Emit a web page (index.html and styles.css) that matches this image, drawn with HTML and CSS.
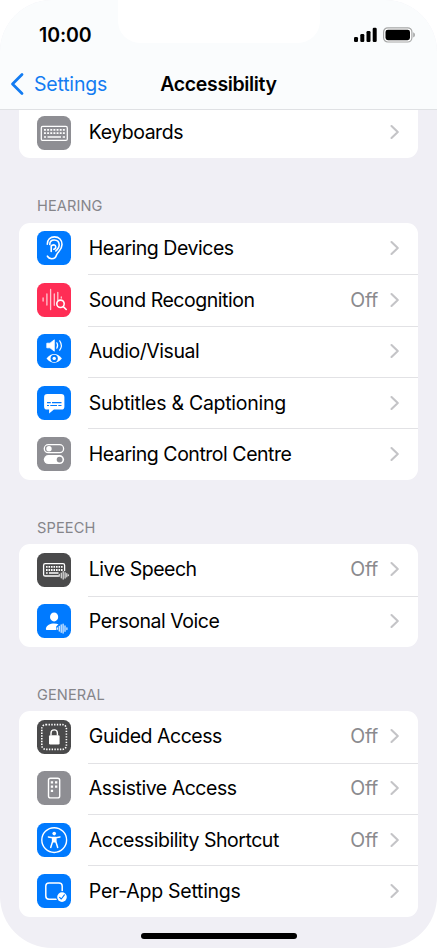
FILE: index.html
```html
<!DOCTYPE html>
<html lang="en">
<head>
<meta charset="utf-8">
<title>Accessibility</title>
<link rel="stylesheet" href="styles.css">
</head>
<body>
<svg class="defs" aria-hidden="true">
  <symbol id="chevron" viewBox="0 0 10 16"><path d="M1.5 2 L7.8 8 L1.5 14" fill="none" stroke="#c4c4c7" stroke-width="2.1" stroke-linecap="round" stroke-linejoin="round"/></symbol>
</svg>
<div class="screen">
  <header class="header">
    <div class="notch"></div>
    <div class="status">
      <span class="time">10:00</span>
      <div class="indicators">
        <svg width="24" height="16" viewBox="0 0 24 16"><rect x="0" y="10" width="4" height="5" rx="1.2"/><rect x="6.3" y="7" width="4" height="8" rx="1.2"/><rect x="12.5" y="4" width="4" height="11" rx="1.2"/><rect x="18.7" y="0.7" width="4" height="14.3" rx="1.2"/></svg>
        <svg width="33" height="16" viewBox="0 0 33 16"><rect x="0.6" y="0.8" width="28.3" height="14.2" rx="4.2" fill="#fff" stroke="#a5a6a6" stroke-width="1.2"/><rect x="2.5" y="2.7" width="24.5" height="10.5" rx="2.4"/><path d="M30.2 5.3 Q32 6 32 7.9 Q32 9.8 30.2 10.5Z" fill="#a5a6a6"/></svg>
      </div>
    </div>
    <nav class="nav">
      <a class="back"><svg width="14" height="24" viewBox="0 0 14 24"><path d="M12 2.5 L2.5 12 L12 21.5" fill="none" stroke="#137cf2" stroke-width="2.8" stroke-linecap="round" stroke-linejoin="round"/></svg><span>Settings</span></a>
      <h1>Accessibility</h1>
      <span></span>
    </nav>
  </header>
  <main class="content">
    <section class="card card-cut">
      <div class="row">
        <svg class="icon gray" viewBox="0 0 34 34"><rect x="4.3" y="10.4" width="26" height="14" rx="1.5" fill="none" stroke="#fff" stroke-width="1.3"/><path d="M7 13.8H28M7 17.2H28" stroke="#fff" stroke-width="1.8" stroke-dasharray="1.9 1.25"/><path d="M7 21H9M10.5 21H24M25.7 21H28" stroke="#fff" stroke-width="1.6"/></svg>
        <div class="body"><span class="label">Keyboards</span><svg class="chev"><use href="#chevron"/></svg></div>
      </div>
    </section>
    <h2>HEARING</h2>
    <section class="card">
      <div class="row">
        <svg class="icon blue" viewBox="0 0 34 34"><g fill="none" stroke="#fff" stroke-width="1.6" stroke-linecap="round" stroke-linejoin="round"><path d="M10.3 13.2C10.3 8.6 13.4 5.9 17.4 5.9C22.1 5.9 25 9.2 25 13.6C25 19.6 20.4 20.7 19.4 24.3C18.8 26.6 17 27.8 14.8 27.8C12.7 27.8 11.2 26.8 10.4 25.2"/><path d="M12.8 13.5C12.8 10.6 14.7 9 17.2 9C20.1 9 22.2 11 22.2 14.2C22.2 17.3 20.4 18.3 18.8 20"/><path d="M14.2 14.8Q18.3 12.7 18.7 15.6Q18.9 18.1 16.7 18.3M14.2 14.8V20.5"/></g></svg>
        <div class="body"><span class="label">Hearing Devices</span><svg class="chev"><use href="#chevron"/></svg></div>
      </div>
      <div class="row">
        <svg class="icon red" viewBox="0 0 34 34"><g fill="none" stroke="#ffc7d0" stroke-width="1.3" stroke-linecap="round"><path d="M6.1 15V18M9.9 11V22M13.6 6.5V26.5M17.3 11V22.3M20.8 9.3V17M24.3 14V15"/></g><g fill="none" stroke="#fff" stroke-width="1.6" stroke-linecap="round"><circle cx="23.5" cy="20.8" r="3.7"/><path d="M26.3 23.6L29.2 26.5"/></g></svg>
        <div class="body"><span class="label">Sound Recognition</span><span class="value">Off</span><svg class="chev"><use href="#chevron"/></svg></div>
      </div>
      <div class="row">
        <svg class="icon blue" viewBox="0 0 34 34"><path d="M9.8 9.2H13L17.3 5.8V17.2L13 13.8H9.8Z" fill="#fff" stroke="#fff" stroke-width=".8" stroke-linejoin="round"/><path d="M19.8 8.8Q21.5 11.5 19.8 14.2M22.7 6.8Q26 11.5 22.7 16.2" fill="none" stroke="#fff" stroke-width="1.2" stroke-linecap="round"/><path d="M9.5 24.4Q17.2 15.6 24.9 24.4Q17.2 33.2 9.5 24.4Z" fill="#fff"/><circle cx="17.2" cy="24.4" r="3.6" fill="#007aff"/><circle cx="17.2" cy="24.4" r="1.7" fill="#fff"/></svg>
        <div class="body"><span class="label">Audio/Visual</span><svg class="chev"><use href="#chevron"/></svg></div>
      </div>
      <div class="row">
        <svg class="icon blue" viewBox="0 0 34 34"><path d="M10.3 8H24.2Q27.4 8 27.4 11.2V20.4Q27.4 23.6 24.2 23.6H16.9L12.1 27.5V23.6H10.3Q7.1 23.6 7.1 20.4V11.2Q7.1 8 10.3 8Z" fill="#fff"/><path d="M10 16.7H13.8M15 16.7H24.5M10 19.5H12M13.3 19.5H20M21.3 19.5H24.5" stroke="#007aff" stroke-width="1.2"/></svg>
        <div class="body"><span class="label wide">Subtitles &amp; Captioning</span><svg class="chev"><use href="#chevron"/></svg></div>
      </div>
      <div class="row">
        <svg class="icon gray" viewBox="0 0 34 34"><rect x="7.3" y="7.7" width="19.3" height="7.9" rx="3.95" fill="none" stroke="#fff" stroke-width="1.3"/><circle cx="12" cy="11.7" r="2.7" fill="#fff"/><rect x="6.8" y="18.1" width="20.3" height="9" rx="4.5" fill="#fff"/><circle cx="22.6" cy="22.6" r="2.9" fill="#8e8e93"/></svg>
        <div class="body"><span class="label">Hearing Control Centre</span><svg class="chev"><use href="#chevron"/></svg></div>
      </div>
    </section>
    <h2>SPEECH</h2>
    <section class="card">
      <div class="row">
        <svg class="icon dark" viewBox="0 0 34 34"><path d="M21.5 23H8.2Q6.6 23 6.6 21.4V12.2Q6.6 10.6 8.2 10.6H26Q27.6 10.6 27.6 12.2V17.5" fill="none" stroke="#fff" stroke-width="1.3" stroke-linecap="round"/><path d="M9 13.8H25.7M9 17H25.7" stroke="#fff" stroke-width="1.8" stroke-dasharray="1.6 .9"/><path d="M9 20.1H10.7M12 20.1H21.5" stroke="#fff" stroke-width="1.5"/><path d="M22.3 21.5V23.2M24.3 20.2V24.8M26.2 18.7V26M28.1 19.7V25M29.8 20.7V23.8M31.4 21.8V22.6" stroke="#d7d7d7" stroke-width="1.3" stroke-linecap="round"/></svg>
        <div class="body"><span class="label">Live Speech</span><span class="value">Off</span><svg class="chev"><use href="#chevron"/></svg></div>
      </div>
      <div class="row">
        <svg class="icon blue" viewBox="0 0 34 34"><ellipse cx="17.1" cy="12.9" rx="4.1" ry="4.5" fill="#fff"/><path d="M19.3 26.1H10Q8.5 26.1 8.9 24.4C9.8 21.2 13 19.4 17.1 19.4Q19.6 19.4 21.5 20.3L19.2 22.5Z" fill="#fff"/><path d="M20.4 24V25.2M22.3 22.3V27M24.2 21V28.3M26.1 20.2V29M28 22V27.3M29.9 23.8V25.5" stroke="#d5e9ff" stroke-width="1.3" stroke-linecap="round"/></svg>
        <div class="body"><span class="label">Personal Voice</span><svg class="chev"><use href="#chevron"/></svg></div>
      </div>
    </section>
    <h2>GENERAL</h2>
    <section class="card">
      <div class="row">
        <svg class="icon dark" viewBox="0 0 34 34"><rect x="4.8" y="4.6" width="24.6" height="24.8" rx="4" fill="none" stroke="#fff" stroke-width="1.6" stroke-dasharray="1.4 1.35"/><rect x="12" y="15.2" width="10.6" height="9.2" rx="1.2" fill="#fff"/><path d="M14 15.5V13Q14 9.9 17.2 9.9Q20.4 9.9 20.4 13V15.5" fill="none" stroke="#fff" stroke-width="1.4"/></svg>
        <div class="body"><span class="label">Guided Access</span><span class="value">Off</span><svg class="chev"><use href="#chevron"/></svg></div>
      </div>
      <div class="row">
        <svg class="icon gray" viewBox="0 0 34 34"><rect x="11.5" y="7.3" width="11.2" height="19.6" rx="2" fill="none" stroke="#fff" stroke-width="1.4"/><path d="M13.8 10.2h2.3v2.3h-2.3zM18 10.2h2.3v2.3h-2.3zM13.8 14.5h2.3v2.3h-2.3zM18 14.5h2.3v2.3h-2.3zM13.8 18.8h2.3v2.3h-2.3z" fill="#fff"/></svg>
        <div class="body"><span class="label">Assistive Access</span><span class="value">Off</span><svg class="chev"><use href="#chevron"/></svg></div>
      </div>
      <div class="row">
        <svg class="icon blue" viewBox="0 0 34 34"><circle cx="17.2" cy="17.1" r="12.4" fill="none" stroke="#fff" stroke-width="1.4"/><circle cx="17.2" cy="10.6" r="1.8" fill="#fff"/><path d="M11.4 13.9L15.6 14.7V18.6L13.7 24.4M23 13.9L18.8 14.7V18.6L20.7 24.4" fill="none" stroke="#fff" stroke-width="1.5" stroke-linecap="round" stroke-linejoin="round"/><path d="M15.3 13.8H19.1V19.6H15.3Z" fill="#fff"/></svg>
        <div class="body"><span class="label">Accessibility Shortcut</span><span class="value">Off</span><svg class="chev"><use href="#chevron"/></svg></div>
      </div>
      <div class="row">
        <svg class="icon blue" viewBox="0 0 34 34"><rect x="8.8" y="8.9" width="16.4" height="16.4" rx="3.2" fill="none" stroke="#fff" stroke-width="1.5"/><circle cx="25" cy="23.1" r="6" fill="#007aff"/><circle cx="25" cy="23.1" r="4.8" fill="#fff"/><path d="M22.6 23.3L24.3 25L27.4 20.9" fill="none" stroke="#007aff" stroke-width="1.1" stroke-linecap="round" stroke-linejoin="round"/></svg>
        <div class="body"><span class="label wide">Per-App Settings</span><svg class="chev"><use href="#chevron"/></svg></div>
      </div>
    </section>
  </main>
  <div class="home"></div>
</div>
</body>
</html>
```
FILE: styles.css
```css
* { box-sizing: border-box; }
body { margin: 0; background: #fff; font-family: Inter, sans-serif; color: #000; }
.defs { position: absolute; width: 0; height: 0; }
.screen { position: relative; width: 437px; height: 948px; overflow: hidden; background: #f0eff5; border-radius: 52px; display: flex; flex-direction: column; }
.header { position: relative; height: 110px; flex: none; background: #fafcfd; border-bottom: 1px solid #dfe1e4; padding-top: 24px; }
.notch { position: absolute; top: 0; left: 118px; width: 202px; height: 43px; background: #fff; border-radius: 0 0 22px 22px; }
.status { display: flex; justify-content: space-between; align-items: center; height: 22px; padding: 0 21px 0 39px; }
.time { font-size: 19.5px; font-weight: 600; letter-spacing: -0.1px; }
.indicators { display: flex; gap: 5px; }
.indicators svg { display: block; }
.nav { display: grid; grid-template-columns: 1fr auto 1fr; align-items: center; height: 24px; margin-top: 26px; padding: 0 10px; }
.back { display: flex; align-items: center; gap: 10px; color: #137cf2; font-size: 19.5px; letter-spacing: -0.2px; }
h1 { margin: 0; font-size: 19.5px; font-weight: 600; letter-spacing: -0.35px; }
.content { display: flex; flex-direction: column; padding: 0 19px; }
.card { background: #fff; border-radius: 11px; overflow: hidden; }
.card-cut { height: 48.4px; border-radius: 0 0 11px 11px; display: flex; flex-direction: column; justify-content: flex-end; }
.row { flex: none; height: 51.4px; display: flex; align-items: center; padding-left: 18px; gap: 17px; }
.icon { width: 34px; height: 34px; flex: none; border-radius: 7.5px; }
.gray { background: #8e8e93; }
.blue { background: #007aff; }
.red { background: #ff2d55; }
.dark { background: #4a4a4b; }
.body { flex: 1; height: 100%; display: flex; align-items: center; padding: 0 18px 1px 0.8px; }
.row + .row .body { border-top: 1px solid #e2e2e5; }
.label { flex: 1; font-size: 19.5px; letter-spacing: -0.47px; }
.label.wide { letter-spacing: -0.27px; }
.value { font-size: 19.5px; letter-spacing: -0.3px; color: #8a8a8e; margin-right: 12px; }
.chev { width: 10px; height: 16px; flex: none; }
h2 { margin: 0; height: 64.4px; padding: 39px 18px 0; font-size: 14.6px; line-height: 18px; font-weight: 400; color: #85858a; letter-spacing: 0.1px; }
.home { position: absolute; left: 141px; bottom: 9px; width: 156px; height: 6px; border-radius: 3px; background: #000; }
```
